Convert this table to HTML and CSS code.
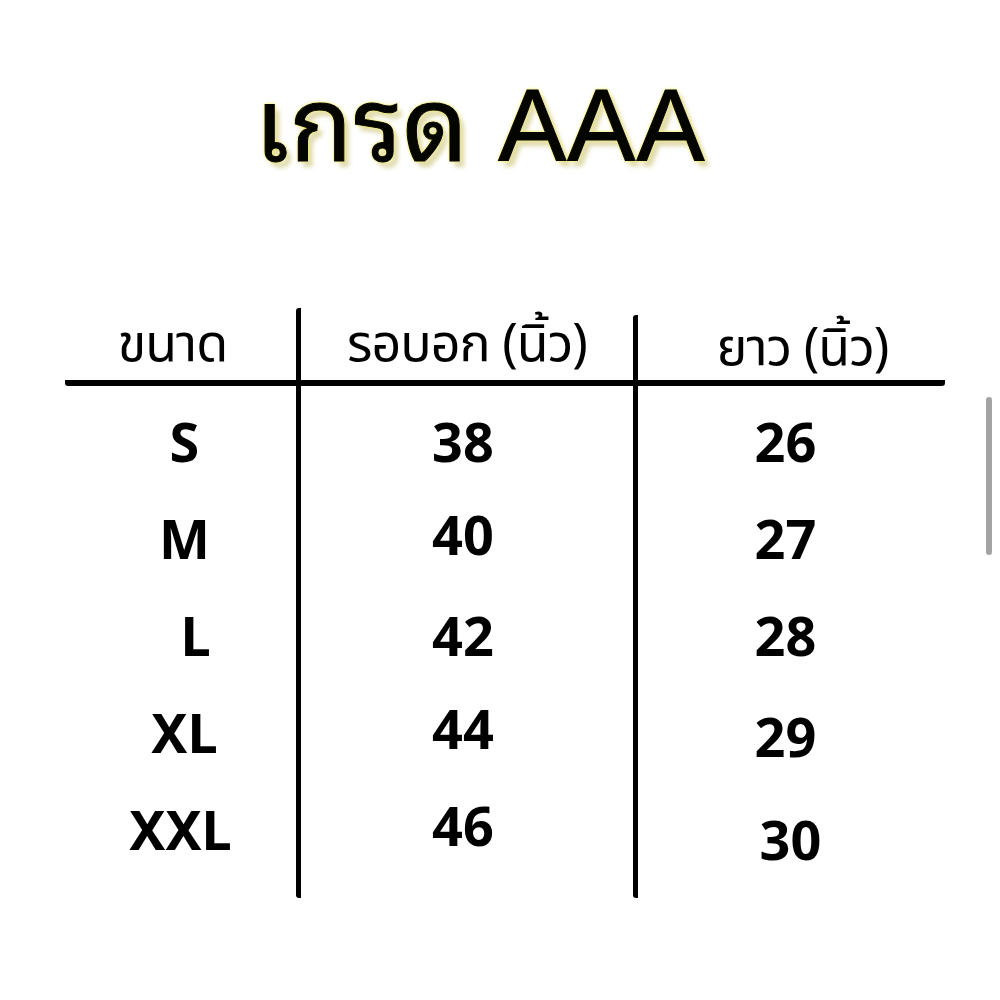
FILE: index.html
```html
<!DOCTYPE html>
<html lang="th">
<head>
<meta charset="utf-8">
<title>เกรด AAA</title>
<link rel="stylesheet" href="styles.css">
</head>
<body>
<div class="page">
  <h1 class="title">เกรด AAA</h1>
  <div class="table">
    <div class="col col-size">
      <div class="head">ขนาด</div>
      <div class="cell">S</div>
      <div class="cell">M</div>
      <div class="cell nudge-l">L</div>
      <div class="cell">XL</div>
      <div class="cell nudge-xxl">XXL</div>
    </div>
    <div class="col col-chest">
      <div class="head">รอบอก (นิ้ว)</div>
      <div class="cell">38</div>
      <div class="cell up">40</div>
      <div class="cell">42</div>
      <div class="cell up">44</div>
      <div class="cell up">46</div>
    </div>
    <div class="col col-len">
      <div class="head">ยาว (นิ้ว)</div>
      <div class="cell">26</div>
      <div class="cell">27</div>
      <div class="cell">28</div>
      <div class="cell down">29</div>
      <div class="cell down2">30</div>
    </div>
  </div>
  <div class="scrollbar"></div>
</div>
</body>
</html>
```

FILE: styles.css
```css
html, body {
  margin: 0;
  padding: 0;
  background: #ffffff;
}

.page {
  position: relative;
  width: 1000px;
  height: 1000px;
  overflow: hidden;
  font-family: "Noto Sans", "Noto Sans Thai", "Liberation Sans", sans-serif;
  color: #000;
}

.title {
  margin: 0;
  padding: 70px 40px 0 0;
  height: 236px;
  box-sizing: border-box;
  text-align: center;
  font-family: "Liberation Sans", "Noto Sans Thai Looped", "Noto Serif Thai", "Noto Sans Thai", sans-serif;
  font-weight: 400;
  font-size: 102px;
  line-height: 112px;
  letter-spacing: 1px;
  color: #050500;
  -webkit-text-stroke: 1px #050500;
  text-shadow:
    0 0 1px #ece44c,
    0 0 2px #ece44c,
    0 0 3px #f0ea70,
    0 0 5px #f6f2a8,
    5px 6px 4px rgba(190, 180, 90, 0.5);
}

.table {
  display: flex;
  margin-left: 65px;
  width: 880px;
  margin-top: 72px;
}

.col {
  display: flex;
  flex-direction: column;
}

.col-size {
  width: 231px;
}

.col-chest {
  width: 332px;
  border-left: 5px solid #000;
  border-radius: 3px;
  padding-bottom: 16px;
}

.col-len {
  width: 307px;
  border-left: 5px solid #000;
  border-radius: 3px;
  margin-top: 7px;
  padding-bottom: 21px;
}

.head {
  border-bottom: 6px solid #000;
  display: flex;
  align-items: center;
  justify-content: center;
  font-size: 52px;
  font-weight: 400;
  letter-spacing: -1px;
  padding-bottom: 6px;
  box-sizing: border-box;
  height: 78px;
  line-height: 1;
}

.col-size .head {
  border-radius: 3px 0 0 3px;
  padding-right: 16px;
}

.col-chest .head {
  padding-left: 0;
}

.col-len .head {
  height: 71px;
  border-radius: 0 3px 3px 0;
  padding-left: 22px;
}

.cell {
  height: 97px;
  display: flex;
  align-items: center;
  justify-content: center;
  font-size: 54px;
  font-weight: 700;
  line-height: 1;
}

.col .head + .cell {
  margin-top: 6px;
}

.col-size .cell {
  padding-left: 8px;
}

.col-chest .cell {
  padding-right: 8px;
}

.col-len .cell {
  padding-right: 12px;
}

.nudge-l {
  padding-left: 30px !important;
}

.nudge-xxl {
  padding-left: 0 !important;
}

.up {
  padding-bottom: 8px;
  box-sizing: border-box;
}

.down {
  padding-top: 8px;
  box-sizing: border-box;
}

.down2 {
  padding-top: 20px;
  padding-right: 2px !important;
  box-sizing: border-box;
}

.scrollbar {
  position: absolute;
  left: 986px;
  top: 397px;
  width: 6px;
  height: 158px;
  border-radius: 3px;
  background: #a3a3a3;
}
```
